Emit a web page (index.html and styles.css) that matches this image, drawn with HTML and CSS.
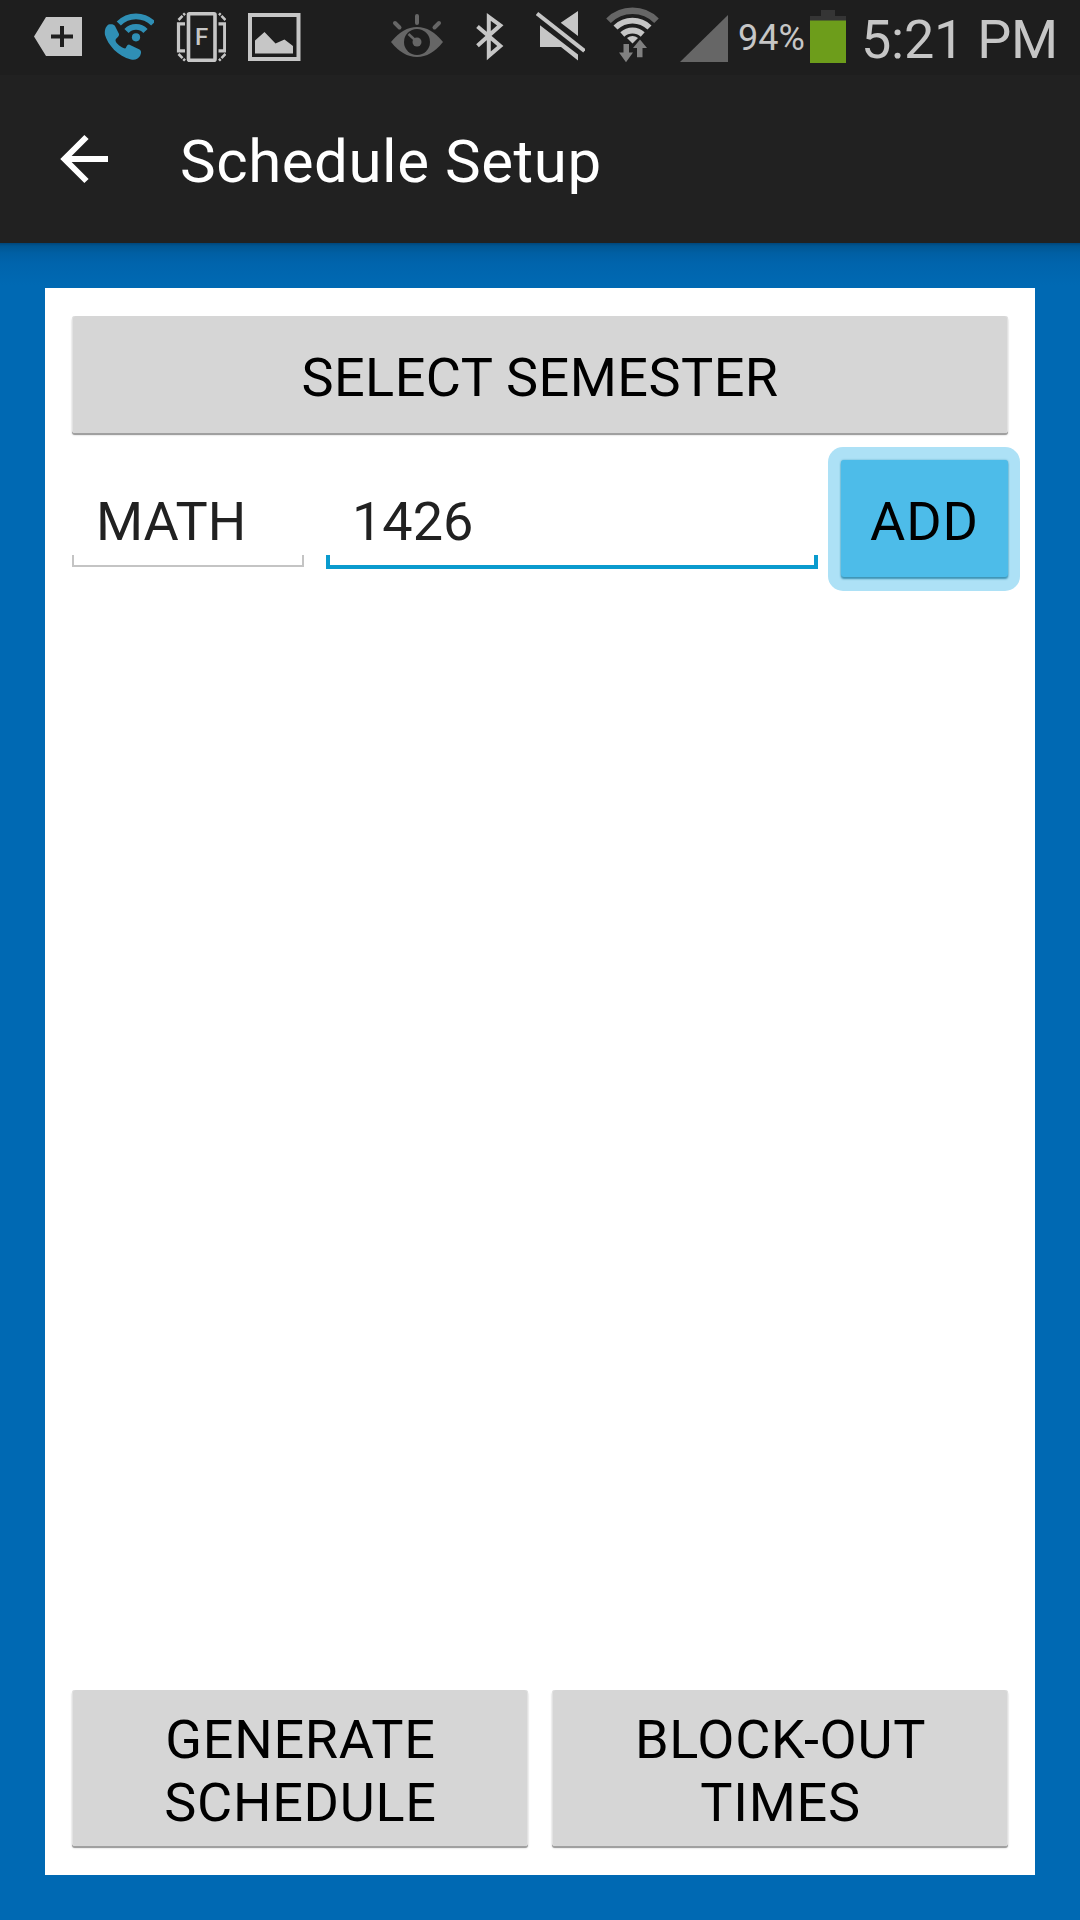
FILE: index.html
```html
<!DOCTYPE html>
<html lang="en">
<head>
<meta charset="utf-8">
<title>Schedule Setup</title>
<link rel="stylesheet" href="styles.css">
</head>
<body>
<header class="status">
  <div class="status-left">
    <svg width="48" height="75" viewBox="34 0 48 75"><path fill="#c6c6c6" fill-rule="evenodd" d="M34 36.5 46 17H82V56H46ZM60 26V34.5H51V38.5H60V47H64V38.5H73V34.5H64V26Z"/></svg>
    <svg width="50" height="75" viewBox="104 0 50 75"><g fill="none" stroke="#2f8fb5" stroke-width="5.800"><path d="M118.800 23.600A24 24 0 0 1 153.200 23.600M126.500 31A13 13 0 0 1 145.500 31"/></g><circle cx="136" cy="37.300" r="4.100" fill="#2f8fb5"/><path fill="#2f8fb5" d="M108.500 24.500C111 24 114 24 115 26L119 34C119.500 37 115.500 38 115.500 40.500C116 43.500 121 47.500 125 48.500C126.500 48 126.500 44.500 129 44.500L139.500 49.500C142 51 141 54 140 56C138 59 135 60.500 131 59.500C118 56.500 108 45 105 35C104.500 31 105 27 108.500 24.500Z"/></svg>
    <svg width="50" height="75" viewBox="176 0 50 75"><g fill="none" stroke="#c6c6c6"><rect x="188.500" y="13.800" width="26.500" height="46.500" rx="1" stroke-width="3.600"/><path stroke-width="3.200" d="M185 23.800H178.500V50.800H185M218.500 23.800H224.700V50.800H218.500"/><path stroke-width="2.600" stroke-dasharray="5.800 1.200" d="M178.500 20 185 13.300M225.500 20 219 13.300M178.500 54 185 60.700M225.500 54 219 60.700"/></g><text class="mode-letter" x="195" y="44.500">F</text></svg>
    <svg width="53" height="75" viewBox="248 0 53 75"><rect x="250" y="15" width="48.500" height="44" fill="none" stroke="#c6c6c6" stroke-width="4"/><path fill="#c6c6c6" d="M255 40.500 264.500 32 275.500 43.500 284.500 39.500 293 46V53.500H255Z"/></svg>
  </div>
  <div class="status-right">
    <svg width="52" height="75" viewBox="391 0 52 75"><path fill="#666" d="M391 42Q403 27 417 27T443 42Q431 57 417 57T391 42Z"/><circle cx="417" cy="42" r="13" fill="#1e1e1e"/><circle cx="417" cy="42" r="4.500" fill="#666"/><path stroke="#666" stroke-width="4" stroke-linecap="round" d="M417 16V23M395 23 399.500 27.500M439 23 434.500 27.500"/><path stroke="#666" stroke-width="2.500" d="M408.500 34 415 40"/></svg>
    <svg width="28" height="75" viewBox="476 0 28 75"><path fill="none" stroke="#c6c6c6" stroke-width="4" d="M477.500 26.500 500.300 46 488.800 55.800V17L500.300 25.300 477.500 45.800"/></svg>
    <svg width="49" height="75" viewBox="536 0 49 75"><path fill="#c6c6c6" d="M560.700 22.700 578 11V36ZM540 25.300 578 54.500V60.500L561 47H540Z"/><path stroke="#c6c6c6" stroke-width="4" d="M537 13.500 584.500 51"/></svg>
    <svg width="53" height="75" viewBox="606 0 53 75"><path fill="none" stroke="#666" stroke-width="6.500" d="M608.500 20.700A34 34 0 0 1 656.500 20.700"/><g fill="none" stroke="#c6c6c6" stroke-width="5.800"><path d="M615.500 27.500A24.500 24.500 0 0 1 649.500 27.500M622.300 34.500A15 15 0 0 1 642.700 34.500"/></g><path fill="#c6c6c6" d="M632.500 43.500 627 38Q632.500 34 638 38Z"/><path fill="#808080" stroke="#1e1e1e" stroke-width="1.500" paint-order="stroke" d="M623.500 44H629V52.500H633L626 62.300 619 52.500H623.500ZM637 57.300H642.500V48H647L640 39.500 633 48H637Z"/></svg>
    <svg width="48" height="75" viewBox="680 0 48 75"><path fill="#666" d="M680 62 728 15V62Z"/></svg>
    <span class="percent">94%</span>
    <svg width="36" height="75" viewBox="810 0 36 75"><path fill="#353535" d="M821 10H835V16H846V21H810V16H821Z"/><path fill="#6d9d1b" d="M810 20.500H846V63H810Z"/></svg>
    <time class="clock">5:21 PM</time>
  </div>
</header>
<nav class="appbar">
  <svg class="back" width="48" height="54" viewBox="60 132 48 54"><path fill="none" stroke="#fff" stroke-width="6" d="M86.500 137 64.500 159 86.500 181M64.500 159H108"/></svg>
  <h1 class="title">Schedule Setup</h1>
</nav>
<main class="page">
  <section class="card">
    <button class="button semester">SELECT SEMESTER</button>
    <div class="course-row">
      <input class="field" type="text" value="MATH" aria-label="Subject">
      <input class="field field-active" type="text" value="1426" aria-label="Course number">
      <div class="focus-ring"><button class="button add">ADD</button></div>
    </div>
    <div class="actions">
      <button class="button">GENERATE<br>SCHEDULE</button>
      <button class="button">BLOCK-OUT<br>TIMES</button>
    </div>
  </section>
</main>
</body>
</html>
```
FILE: styles.css
```css
* { box-sizing: border-box; }

body {
  margin: 0;
  height: 1920px;
  display: flex;
  flex-direction: column;
  font-family: Roboto, sans-serif;
  background: #0069b3;
}

svg { display: block; flex: none; }

.status {
  height: 75px;
  flex: none;
  display: flex;
  justify-content: space-between;
  padding: 0 26px 0 34px;
  background: #1e1e1e;
  color: #c6c6c6;
}

.status-left { display: flex; gap: 22px; }
.status-right { display: flex; }
.status-right svg:nth-child(1) { margin-right: 33px; }
.status-right svg:nth-child(2) { margin-right: 32px; }
.status-right svg:nth-child(3) { margin-right: 21px; }
.status-right svg:nth-child(4) { margin-right: 21px; }

.mode-letter { font: 500 24px Roboto, sans-serif; fill: #c6c6c6; }

.percent {
  width: 82px;
  padding-left: 10px;
  font-size: 36px;
  line-height: 77px;
  white-space: nowrap;
}

.clock {
  width: 208px;
  padding-left: 15px;
  font-size: 54px;
  line-height: 79px;
  letter-spacing: -.25px;
  white-space: nowrap;
}

.appbar {
  height: 168px;
  flex: none;
  display: flex;
  align-items: center;
  gap: 72px;
  padding-left: 60px;
  background: #212121;
  color: #fff;
}

.title {
  margin: 0;
  padding-top: 5px;
  font-size: 60px;
  font-weight: 400;
  line-height: 70px;
  letter-spacing: .55px;
}

.page {
  flex: 1;
  display: flex;
  padding: 45px;
  background: linear-gradient(#00467a 0, #005692 3px, #005fa3 10px, #0064ac 20px, #0069b3 42px);
}

.card {
  flex: 1;
  min-width: 0;
  display: flex;
  flex-direction: column;
  padding: 28px 27px 29px;
  background: #fff;
}

.button {
  border: 0;
  border-radius: 3px;
  padding: 5px 0 0;
  font: 400 54px/63px Roboto, sans-serif;
  letter-spacing: .45px;
  color: #000;
  background: #d6d6d6;
  box-shadow: inset 1px 0 #e2e2e2, inset -1px 0 #e2e2e2, 0 2px 0 #a0a0a0, 0 2px 2px rgba(0, 0, 0, .25);
}

.semester { height: 117px; }

.course-row {
  display: grid;
  grid-template-columns: 232px 492px 180px;
  column-gap: 22px;
  align-items: start;
  margin: 14px -12px 0 0;
}

.field {
  --line: #c4c4c4;
  --weight: 2px;
  width: 100%;
  height: 107px;
  margin-top: 13px;
  border: 0;
  outline: 0;
  border-radius: 0;
  padding: 16px 0 0 24px;
  font: 400 54px/63px Roboto, sans-serif;
  color: #212121;
  background:
    linear-gradient(var(--line) 0 0) left bottom / 100% var(--weight) no-repeat,
    linear-gradient(var(--line) 0 0) left bottom / var(--weight) 12px no-repeat,
    linear-gradient(var(--line) 0 0) right bottom / var(--weight) 12px no-repeat;
}

.field-active {
  --line: #0a9bce;
  --weight: 4px;
  height: 109px;
  padding: 14px 0 0 26px;
  background-size: 100% 4px, 4px 14px, 4px 14px;
}

/* Pale ring around the focused button; it reaches past the row's right edge. */
.focus-ring {
  display: flex;
  height: 144px;
  margin-left: -12px;
  padding: 13px 12px 14px 13px;
  border-radius: 15px;
  background: #ade1f6;
}

.add {
  flex: 1;
  letter-spacing: .9px;
  background: #4dbce9;
  box-shadow: 0 2px 2px #3b93b5, 0 0 2px #5aa9c8;
}

.actions {
  display: grid;
  grid-template-columns: 1fr 1fr;
  gap: 24px;
  margin-top: auto;
}

.actions .button { height: 156px; padding: 5px 0 0 1px; letter-spacing: .7px; }
```
